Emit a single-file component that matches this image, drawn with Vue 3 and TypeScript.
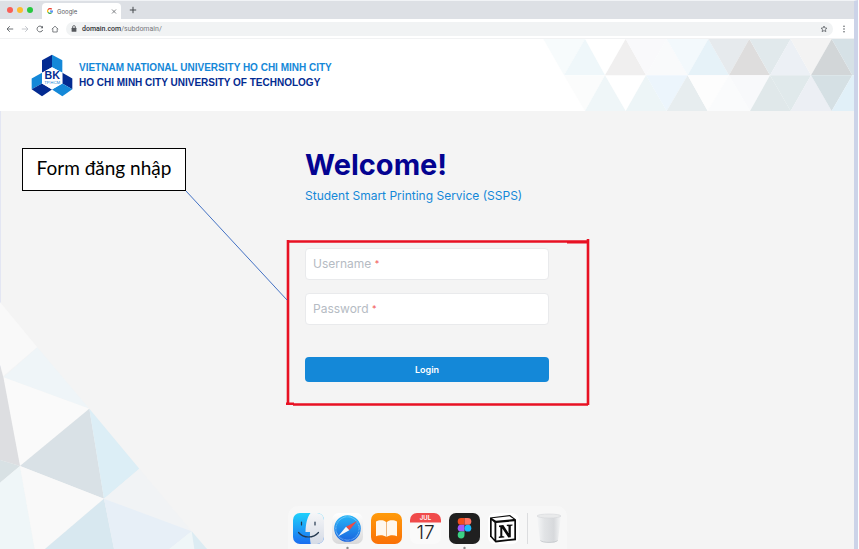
<script setup lang="ts">
import { ref } from 'vue'

interface Facet {
  points: string
  fill: string
}

const username = ref('')
const password = ref('')

const bannerFacets: Facet[] = [
  { points: '370,6 495,6 432,115', fill: '#f7fbfc' },
  { points: '495,6 432,115 555,115', fill: '#eff7fa' },
  { points: '617,6 555,115 678,115', fill: '#f0efef' },
  { points: '617,6 740,6 678,115', fill: '#f9f9fb' },
  { points: '740,6 678,115 803,115', fill: '#f9fafb' },
  { points: '740,6 865,6 803,115', fill: '#f3f9fc' },
  { points: '865,6 803,115 927,115', fill: '#e6f2f8' },
  { points: '865,6 988,6 927,115', fill: '#e6eaed' },
  { points: '988,6 927,115 1050,115', fill: '#dedddd' },
  { points: '988,6 1112,6 1050,115', fill: '#e1e9ec' },
  { points: '1112,6 1050,115 1173,115', fill: '#ecf0f5' },
  { points: '1112,6 1235,6 1173,115', fill: '#f3f3f3' },
  { points: '1235,6 1173,115 1297,115', fill: '#d2d6d8' },
  { points: '1235,6 1302,6 1302,115 1297,115', fill: '#d6e1e6' },
  { points: '432,115 555,115 495,222', fill: '#fbfcfc' },
  { points: '555,115 495,222 617,222', fill: '#eff6f8' },
  { points: '678,115 617,222 740,222', fill: '#edf5f7' },
  { points: '678,115 803,115 740,222', fill: '#ecf5fc' },
  { points: '803,115 740,222 863,222', fill: '#e7edef' },
  { points: '803,115 927,115 863,222', fill: '#fdfdfd' },
  { points: '927,115 863,222 990,222', fill: '#fafbfc' },
  { points: '927,115 1050,115 990,222', fill: '#f8f9fb' },
  { points: '1050,115 990,222 1112,222', fill: '#e0e8ea' },
  { points: '1050,115 1173,115 1112,222', fill: '#e0e9eb' },
  { points: '1173,115 1112,222 1235,222', fill: '#eceff4' },
  { points: '1173,115 1297,115 1235,222', fill: '#d5e0e4' },
  { points: '1302,115 1297,115 1235,222 1302,222', fill: '#e1f0f8' },
]

const cornerFacets: Facet[] = [
  { points: '0,36 112,172 10,258 0,225', fill: '#f9f9f9' },
  { points: '112,172 268,356 10,262', fill: '#eff5f8' },
  { points: '10,262 268,356 60,528', fill: '#fafafa' },
  { points: '0,225 10,262 60,528 0,510', fill: '#dddee1' },
  { points: '0,510 60,528 0,578', fill: '#d8e1e4' },
  { points: '268,356 60,528 312,626', fill: '#d9e1e6' },
  { points: '268,356 418,536 312,626', fill: '#dceef6' },
  { points: '418,536 575,724 312,626', fill: '#f1f3f5' },
  { points: '0,578 60,528 104,777 0,777', fill: '#eff6f8' },
  { points: '60,528 312,626 135,777 104,777', fill: '#f9f9f9' },
  { points: '312,626 342,777 135,777', fill: '#d8e8f0' },
  { points: '312,626 575,724 508,777 342,777', fill: '#e7eff7' },
  { points: '575,724 583,777 508,777', fill: '#eff6f8' },
  { points: '575,724 621,777 583,777', fill: '#dcecf3' },
]
</script>

<template>
  <div class="browser">
    <div class="tabs">
      <span class="light red"></span>
      <span class="light yellow"></span>
      <span class="light green"></span>
      <div class="tab">
        <svg class="favicon" viewBox="0 0 24 24" aria-hidden="true" fill="none" stroke-width="5">
          <path d="M19 5A9.500 9.500 0 0 0 4 7" stroke="#ea4335" />
          <path d="M4 7a9.500 9.500 0 0 0 0 10" stroke="#fbbc05" />
          <path d="M4 17a9.500 9.500 0 0 0 14 2" stroke="#34a853" />
          <path d="M18 19a9.500 9.500 0 0 0 3.500-7H12" stroke="#4285f4" />
        </svg>
        <span class="tab-title">Google</span>
        <button class="icon-button" type="button" aria-label="Close tab">
          <svg class="small" viewBox="0 0 6 6"><path d="M1 1l4 4M5 1L1 5" stroke="#5f6368" stroke-width=".8" /></svg>
        </button>
      </div>
      <button class="icon-button" type="button" aria-label="New tab">
        <svg class="glyph" viewBox="0 0 8 8"><path d="M4 .8v6.400M.8 4h6.400" stroke="#45484c" stroke-width="1" /></svg>
      </button>
    </div>

    <div class="toolbar">
      <button class="icon-button" type="button" aria-label="Back">
        <svg class="glyph" viewBox="0 0 8 8" fill="none" stroke="#5f6368" stroke-width=".9"><path d="M7.200 4H1M3.800 1.200L1 4l2.800 2.800" /></svg>
      </button>
      <button class="icon-button" type="button" aria-label="Forward">
        <svg class="glyph" viewBox="0 0 8 8" fill="none" stroke="#bdc1c6" stroke-width=".9"><path d="M.8 4H7M4.200 1.200L7 4 4.200 6.800" /></svg>
      </button>
      <button class="icon-button" type="button" aria-label="Reload">
        <svg class="glyph" viewBox="0 0 8 8" fill="none" stroke="#5f6368" stroke-width=".9"><path d="M6.700 5A2.900 2.900 0 1 1 6.200 2.100" /><path d="M7 .7v2.500H4.500z" fill="#5f6368" stroke="none" /></svg>
      </button>
      <button class="icon-button" type="button" aria-label="Home">
        <svg class="glyph" viewBox="0 0 8 8" fill="none" stroke="#5f6368" stroke-width=".8"><path d="M.8 4.200L4 1.200l3.200 3M1.800 3.500V7h4.400V3.500" /></svg>
      </button>
      <div class="address">
        <svg class="small" viewBox="0 0 6 7" aria-hidden="true"><rect x=".6" y="2.700" width="4.800" height="4" rx=".5" fill="#55585c" /><path d="M1.600 3V2a1.400 1.400 0 0 1 2.800 0v1" fill="none" stroke="#55585c" stroke-width=".8" /></svg>
        <span class="url"><b>domain.com</b>/subdomain/</span>
        <button class="icon-button" type="button" aria-label="Bookmark">
          <svg class="glyph" viewBox="0 0 24 24" fill="none" stroke="#5f6368" stroke-width="2.400"><path d="M12 3l2.700 6 6.300.6-4.800 4.300L17.600 20 12 16.700 6.400 20l1.400-6.100L3 9.600 9.300 9z" /></svg>
        </button>
      </div>
      <button class="icon-button" type="button" aria-label="Menu">
        <svg class="glyph" viewBox="0 0 8 8" fill="#5f6368"><circle cx="4" cy="1.300" r=".8" /><circle cx="4" cy="4" r=".8" /><circle cx="4" cy="6.700" r=".8" /></svg>
      </button>
    </div>

    <header class="banner">
      <div class="brand">
        <svg class="logo" viewBox="10 9 126 128" role="img" aria-label="BK TP.HCM">
          <path d="M43 27L73 11v37L43 65z" fill="#032b91" />
          <path d="M73 11l31 16v38L73 48z" fill="#1488d8" />
          <path d="M12 82l31-17v32l-31 17z" fill="#1488d8" />
          <path d="M12 114l31-17 30 18-30 20z" fill="#032b91" />
          <path d="M104 65l30 17v32l-30-17z" fill="#032b91" />
          <path d="M104 97l30 17-30 21-31-20z" fill="#1488d8" />
          <path d="M73 48l31 17v32l-31 18-30-18V65z" fill="#fff" />
          <text x="73.500" y="85" text-anchor="middle" font-size="32" font-weight="700" fill="#032b91">BK</text>
          <text x="73.500" y="98" text-anchor="middle" font-size="13" fill="#1488d8">TP.HCM</text>
        </svg>
        <div class="brand-text">
          <p class="parent">VIETNAM NATIONAL UNIVERSITY HO CHI MINH CITY</p>
          <p class="school">HO CHI MINH CITY UNIVERSITY OF TECHNOLOGY</p>
        </div>
      </div>
      <svg class="facets" viewBox="360 6 942 216" preserveAspectRatio="xMaxYMid slice" aria-hidden="true">
        <polygon v-for="facet in bannerFacets" :key="facet.points" :points="facet.points" :fill="facet.fill" />
      </svg>
    </header>

    <div class="page">
      <svg class="corner" viewBox="0 0 621 777" aria-hidden="true">
        <polygon v-for="facet in cornerFacets" :key="facet.points" :points="facet.points" :fill="facet.fill" />
      </svg>

      <main class="content">
        <h1>Welcome!</h1>
        <p class="subtitle">Student Smart Printing Service (SSPS)</p>

        <form class="login" @submit.prevent>
          <div class="field">
            <input id="username" v-model="username" type="text" autocomplete="username" required />
            <label v-show="!username" for="username">Username <span class="star">*</span></label>
          </div>
          <div class="field">
            <input id="password" v-model="password" type="password" autocomplete="current-password" required />
            <label v-show="!password" for="password">Password <span class="star">*</span></label>
          </div>
          <button class="submit" type="submit">Login</button>

          <svg class="frame" viewBox="286 239 304 168" aria-hidden="true">
            <g fill="none" stroke="#e81123" stroke-width="2.600">
              <path d="M288 240v164M287 241.500h301M588 239v166M293 404.500h295" />
              <path d="M286 403.700h8M567 242.300h20" />
            </g>
          </svg>
          <svg class="pointer" viewBox="186 191 101 109" aria-hidden="true">
            <path d="M186 191l101 109" stroke="#4472c4" stroke-width="1" />
          </svg>
          <div class="callout">Form đăng nhập</div>
        </form>
      </main>

      <nav class="dock" aria-label="Dock">
        <svg class="app" viewBox="0 0 31 31" role="img" aria-label="Finder">
          <defs>
            <linearGradient id="finderBlue" x1="0" y1="0" x2="0" y2="1"><stop stop-color="#1fd0fb" /><stop offset="1" stop-color="#1a6df0" /></linearGradient>
            <linearGradient id="finderLight" x1="0" y1="0" x2="0" y2="1"><stop stop-color="#f5f6f8" /><stop offset="1" stop-color="#d5dbe6" /></linearGradient>
          </defs>
          <rect width="31" height="31" rx="7" fill="url(#finderBlue)" />
          <path d="M17.500 0H24a7 7 0 0 1 7 7v17a7 7 0 0 1-7 7h-6.300c-.6-3-.9-7-.7-12h-4.500C12.700 11 14 4.500 17.500 0z" fill="url(#finderLight)" />
          <path d="M8.500 9v3M22 9v3M5.500 19.500c5 6 15 6 20 0" fill="none" stroke="#24384f" stroke-width="1.200" stroke-linecap="round" />
        </svg>
        <svg class="app" viewBox="0 0 31 31" role="img" aria-label="Safari">
          <defs>
            <linearGradient id="safariTile" x1="0" y1="0" x2="0" y2="1"><stop stop-color="#fff" /><stop offset="1" stop-color="#d9d9da" /></linearGradient>
            <linearGradient id="safariDial" x1="0" y1="0" x2="0" y2="1"><stop stop-color="#25b5f7" /><stop offset="1" stop-color="#1b63df" /></linearGradient>
          </defs>
          <rect width="31" height="31" rx="7" fill="url(#safariTile)" />
          <circle cx="15.500" cy="15.500" r="13.300" fill="url(#safariDial)" />
          <circle cx="15.500" cy="15.500" r="11.700" fill="none" stroke="#b6e1fa" stroke-width="1.200" stroke-dasharray=".4 .8" />
          <path d="M25 8L14 13.700l3.300 3.600z" fill="#ed4b45" />
          <path d="M6 23.500l8-9.800 3.300 3.600z" fill="#f5f7fa" />
          <circle cx="15.500" cy="35" r="1.200" fill="#8b8b8b" />
        </svg>
        <svg class="app" viewBox="0 0 31 31" role="img" aria-label="Books">
          <defs><linearGradient id="booksTile" x1="0" y1="0" x2="0" y2="1"><stop stop-color="#ff9b0b" /><stop offset="1" stop-color="#fa7006" /></linearGradient></defs>
          <rect width="31" height="31" rx="7" fill="url(#booksTile)" />
          <path d="M15.500 9.300C13 6.500 8 6.700 5 8.500v14.800c3-1.500 7.500-1.500 10.500.8 3-2.300 7.500-2.300 10.500-.8V8.500c-3-1.800-8-2-10.500.8z" fill="#fff7ed" />
          <path d="M15.500 9v15" stroke="#e9a35f" stroke-width=".8" />
        </svg>
        <svg class="app" viewBox="0 0 31 31" role="img" aria-label="Calendar">
          <rect width="31" height="31" rx="7" fill="#fafafa" />
          <path d="M0 9.500V7a7 7 0 0 1 7-7h17a7 7 0 0 1 7 7v2.500z" fill="#f04b4b" />
          <text x="15.500" y="7.300" text-anchor="middle" font-size="6" font-weight="600" fill="#fff">JUL</text>
          <text x="15.500" y="26" text-anchor="middle" font-size="19" font-weight="300" fill="#222">17</text>
        </svg>
        <svg class="app" viewBox="0 0 31 31" role="img" aria-label="Figma">
          <rect width="31" height="31" rx="7" fill="#202020" />
          <path d="M15.500 5h-3.400a3.400 3.400 0 0 0 0 6.800h3.400z" fill="#f24e1e" />
          <path d="M15.500 5h3.400a3.400 3.400 0 0 1 0 6.800h-3.400z" fill="#ff7262" />
          <path d="M15.500 11.800h-3.400a3.400 3.400 0 0 0 0 6.800h3.400z" fill="#a259ff" />
          <circle cx="18.900" cy="15.200" r="3.400" fill="#1abcfe" />
          <path d="M15.500 18.600h-3.400a3.400 3.400 0 1 0 3.400 3.400z" fill="#3bd184" />
          <circle cx="15.500" cy="35" r="1.200" fill="#8b8b8b" />
        </svg>
        <svg class="app" viewBox="0 0 31 31" role="img" aria-label="Notion">
          <rect width="31" height="31" rx="7" fill="#fff" />
          <path d="M2 4.500L22 2l6 4.500v20.700L7.500 29.500 2 23.500z" fill="#0b0b0b" />
          <path d="M4 5.200l17.500-2 4 2.900L8 7.800z" fill="#fff" />
          <path d="M3.700 7.200l2.800 2.500v16.500l-2.800-3.300zM8.300 9.900l18-1.600v17.300l-18 1.900z" fill="#fff" />
          <path d="M11 12.500l4.300-.4 5.200 8v-6.800l-1.700-.3v-1.200l5.700-.4v1.200l-1.700.5v11.200l-2.500.3-6-9v7.400l2 .4v1.100l-5.500.5v-1.200l1.500-.6v-9l-1.300-.3z" fill="#0b0b0b" />
        </svg>
        <span class="divider"></span>
        <svg class="trash" viewBox="2.500 0 26 31" role="img" aria-label="Trash">
          <defs><linearGradient id="trashBody"><stop stop-color="#f5f6f7" /><stop offset=".3" stop-color="#e2e4e6" /><stop offset=".7" stop-color="#d7d9dc" /><stop offset="1" stop-color="#f5f6f7" /></linearGradient></defs>
          <path d="M3.500 3l3 24.500c.3 3 17.700 3 18 0L27.500 3z" fill="url(#trashBody)" />
          <path d="M7 27.500c2 2.500 15 2.500 17 0" fill="none" stroke="#c3c6ca" stroke-width=".8" />
          <ellipse cx="15.500" cy="3" rx="12" ry="2" fill="#e9eaeb" stroke="#d5d7da" stroke-width=".6" />
        </svg>
      </nav>
    </div>
  </div>
</template>

<style>
body {
  margin: 0;
  background: #fff;
}
</style>

<style scoped>
.browser {
  box-sizing: border-box;
  min-height: 100vh;
  margin-right: 1px;
  display: flex;
  flex-direction: column;
  border-top: 1px solid #f1f3f6;
  border-right: 4px solid #ccd3e8;
  background: #f4f4f4;
  box-shadow: inset 1px 0 #e3e6f3;
  font-family: Inter, "Liberation Sans", sans-serif;
}

.icon-button {
  display: flex;
  padding: 0;
  border: 0;
  background: none;
}

.glyph {
  width: 8px;
  height: 8px;
}

.small {
  width: 6px;
  height: 7px;
}

.tabs {
  display: flex;
  align-items: center;
  gap: 4px;
  height: 18px;
  padding-left: 7px;
  background: #dde0e5;
}

.light {
  width: 6px;
  height: 6px;
  border-radius: 50%;
}

.red { background: #f95f57; }
.yellow { background: #fdbc2e; }
.green { background: #27c840; }

.tab {
  box-sizing: border-box;
  display: flex;
  align-items: center;
  align-self: flex-end;
  gap: 4px;
  width: 79px;
  height: 16px;
  margin: 0 4px 0 5px;
  padding: 0 4px 0 5px;
  border-radius: 4px 4px 0 0;
  background: #fff;
}

.favicon {
  width: 6px;
  height: 6px;
}

.tab-title {
  flex: 1;
  color: #55585c;
  font-size: 6px;
}

.toolbar {
  display: flex;
  align-items: center;
  gap: 7px;
  height: 19px;
  padding: 0 6px;
  background: #fff;
}

.address {
  flex: 1;
  display: flex;
  align-items: center;
  gap: 5px;
  height: 14px;
  padding: 0 5px;
  border-radius: 7px;
  background: #f1f3f4;
}

.url {
  flex: 1;
  color: #77797d;
  font-family: Roboto, "Liberation Sans", sans-serif;
  font-size: 7px;
}

.url b {
  color: #303236;
  font-weight: 500;
}

.banner {
  display: flex;
  align-items: center;
  justify-content: space-between;
  height: 73px;
  padding-left: 31px;
  border-top: 1px solid #f1f2f3;
  box-sizing: border-box;
  background: #fff;
}

.brand {
  display: flex;
  align-items: center;
  gap: 6px;
  font-family: "Liberation Sans", Arial, sans-serif;
}

.logo {
  width: 42px;
  height: 43px;
}

.brand-text {
  font-size: 10px;
  font-weight: 700;
  line-height: 15px;
  white-space: nowrap;
}

.brand-text p {
  margin: 0;
}

.parent { color: #1488d8; }
.school { color: #032b91; }

.facets {
  width: 314px;
  height: 100%;
}

.page {
  flex: 1;
  display: grid;
  grid-template-rows: 1fr auto;
}

.corner {
  grid-area: 1 / 1 / 3 / 2;
  align-self: end;
  width: 207px;
  height: 259px;
}

.content {
  grid-area: 1 / 1;
  justify-self: center;
  width: 244px;
  padding-top: 36px;
}

h1 {
  margin: 0;
  color: #030391;
  font-size: 29px;
  font-weight: 700;
  line-height: 36px;
}

.subtitle {
  margin: 5px 0 44px;
  color: #1488d8;
  font-size: 12px;
  line-height: 16px;
  white-space: nowrap;
}

.login {
  position: relative;
  display: flex;
  flex-direction: column;
  gap: 13px;
}

.field {
  display: grid;
  align-items: center;
}

.field input,
.field label {
  grid-area: 1 / 1;
}

.field input {
  box-sizing: border-box;
  width: 100%;
  height: 32px;
  padding: 0 8px;
  border: 1px solid #e9eaec;
  border-radius: 4px;
  background: #fff;
  color: #303236;
  font: inherit;
  font-size: 12px;
}

.field label {
  padding-left: 8px;
  color: #b5bbc3;
  font-size: 12px;
  line-height: 16px;
  pointer-events: none;
}

.star {
  color: #f25555;
  font-size: 9px;
  vertical-align: top;
}

.submit {
  height: 25px;
  margin-top: 19px;
  border: 0;
  border-radius: 4px;
  background: #1488d8;
  color: #fff;
  font: inherit;
  font-size: 9px;
  font-weight: 600;
}

.frame {
  position: absolute;
  top: -9px;
  left: -19px;
  width: 304px;
  height: 168px;
  pointer-events: none;
}

.pointer {
  position: absolute;
  top: -57px;
  left: -119px;
  width: 101px;
  height: 109px;
}

.callout {
  position: absolute;
  top: -100px;
  left: -283px;
  box-sizing: border-box;
  width: 164px;
  height: 43px;
  border: 1px solid #000;
  background: #fff;
  color: #000;
  font-family: Lato, "Open Sans", sans-serif;
  font-size: 19px;
  line-height: 38px;
  text-align: center;
  white-space: nowrap;
}

.dock {
  grid-area: 2 / 1;
  justify-self: center;
  display: flex;
  align-items: center;
  gap: 8px;
  padding: 7px 5px 5px;
  border-radius: 10px 10px 0 0;
  background: #f7f7f7;
}

.app {
  width: 31px;
  height: 31px;
  overflow: visible;
}

.trash {
  width: 26px;
  height: 31px;
}

.divider {
  width: 1px;
  height: 31px;
  background: #dcdddf;
}
</style>
